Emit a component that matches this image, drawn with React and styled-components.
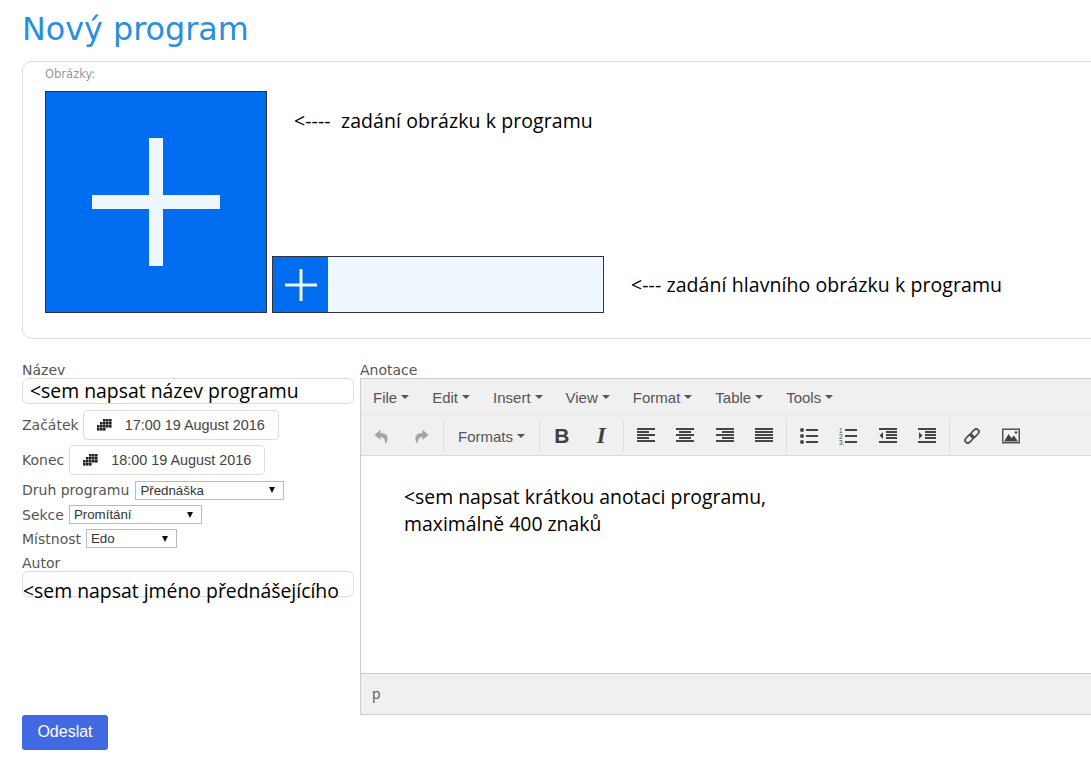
import React from 'react';
import styled, { createGlobalStyle } from 'styled-components';

const Global = createGlobalStyle`
  html, body {
    margin: 0;
    padding: 0;
    background: #fff;
    overflow: hidden;
  }
  body {
    font-family: "DejaVu Sans", sans-serif;
    width: 1091px;
    height: 769px;
  }
`;

const Page = styled.div`
  padding: 9px 0 0 22px;
  width: 1091px;
  height: 769px;
  box-sizing: border-box;
  overflow: hidden;
`;

const Title = styled.h1`
  margin: 0 0 12px;
  font-size: 31.8px;
  line-height: 40px;
  font-weight: 400;
  color: #2a8fdc;
`;

const Panel = styled.fieldset`
  margin: 0;
  padding: 6px 0 0 22px;
  width: 1200px;
  height: 278px;
  box-sizing: border-box;
  border: 1px solid #ddd;
  border-radius: 10px;
`;

const PanelLabel = styled.div`
  font-size: 11.5px;
  line-height: 13px;
  color: #999;
  margin-bottom: 10px;
`;

const Images = styled.div`
  display: flex;
  gap: 5px;
`;

const BigAdd = styled.div`
  width: 222px;
  height: 222px;
  box-sizing: border-box;
  border: 1px solid #333;
  background: #006cf0;
  display: flex;
  align-items: center;
  justify-content: center;
`;

const ImagesSide = styled.div`
  display: flex;
  flex-direction: column;
  justify-content: space-between;
`;

const Note = styled.div`
  font-family: "Open Sans", sans-serif;
  font-size: 19.5px;
  letter-spacing: 0.08px;
  line-height: 24px;
  color: #000;
  white-space: pre;
`;

const TopNote = styled(Note)`
  margin: 18px 0 0 22px;
`;

const MainRow = styled.div`
  display: flex;
  align-items: center;
  gap: 27px;
`;

const MainAdd = styled.div`
  width: 332px;
  height: 57px;
  box-sizing: border-box;
  border: 1px solid #333;
  background: #eef6fe;
  display: flex;
`;

const MainAddIcon = styled.div`
  width: 55px;
  background: #006cf0;
  display: flex;
  align-items: center;
  justify-content: center;
`;

const Form = styled.div`
  display: flex;
  gap: 6px;
  margin-top: 23px;
`;

const Left = styled.div`
  width: 332px;
  flex: none;
`;

const Label = styled.div`
  font-size: 14px;
  line-height: 16px;
  color: #555;
  margin-top: ${props => props.top || 0}px;
`;

const TextBox = styled.div`
  height: 26px;
  box-sizing: border-box;
  border: 1px solid #ddd;
  border-radius: 6px;
  padding-left: ${props => props.inset ?? 7}px;
  font-family: "Open Sans", sans-serif;
  font-size: 19.4px;
  line-height: ${props => props.textLine || 24}px;
  color: #000;
  white-space: nowrap;
`;

const Row = styled.div`
  display: flex;
  align-items: center;
  gap: ${props => props.gap || 5}px;
  height: ${props => props.h}px;
  margin-top: ${props => props.top || 0}px;
`;

const DateButton = styled.div`
  width: 196px;
  height: 30px;
  box-sizing: border-box;
  border: 1px solid #ddd;
  border-radius: 4px;
  display: flex;
  align-items: center;
  padding-left: 13px;
  gap: 12px;
  font-family: "Liberation Sans", sans-serif;
  font-size: 14.4px;
  color: #444;
`;

const Select = styled.div`
  width: ${props => props.w}px;
  height: 19px;
  box-sizing: border-box;
  border: 1px solid #bbb;
  display: flex;
  align-items: center;
  justify-content: space-between;
  padding: 0 8px 0 4px;
  font-family: "Liberation Sans", sans-serif;
  font-size: 13.3px;
  color: #333;
`;

const SelectArrow = styled.span`
  width: 0;
  height: 0;
  border-left: 3.5px solid transparent;
  border-right: 3.5px solid transparent;
  border-top: 6px solid #111;
`;

const Right = styled.div`
  width: 800px;
  flex: none;
`;

const Editor = styled.div`
  width: 800px;
  height: 337px;
  box-sizing: border-box;
  border: 1px solid #ccc;
  display: flex;
  flex-direction: column;
`;

const MenuBar = styled.div`
  height: 36px;
  flex: none;
  box-sizing: border-box;
  background: #f0f0f0;
  border-bottom: 1px solid #e4e4e4;
  display: flex;
  align-items: center;
  padding: 1px 0 0 12px;
  gap: 23px;
  font-family: "Liberation Sans", sans-serif;
  font-size: 15px;
  color: #555;
`;

const MenuItem = styled.div`
  display: flex;
  align-items: center;
  gap: 4px;
`;

const Caret = styled.span`
  width: 0;
  height: 0;
  border-left: 4px solid transparent;
  border-right: 4px solid transparent;
  border-top: 4px solid #555;
`;

const ToolBar = styled.div`
  height: 41px;
  flex: none;
  box-sizing: border-box;
  background: #f0f0f0;
  border-bottom: 1px solid #d9d9d9;
  display: flex;
  align-items: center;
  padding: 2px 0 0 1px;
`;

const Tool = styled.div`
  width: 39.5px;
  height: 30px;
  display: flex;
  align-items: center;
  justify-content: center;
  color: #444;
`;

const FormatsTool = styled.div`
  width: 91px;
  height: 30px;
  display: flex;
  align-items: center;
  justify-content: center;
  gap: 4px;
  font-family: "Liberation Sans", sans-serif;
  font-size: 15px;
  color: #555;
`;

const Divider = styled.div`
  width: 1px;
  height: 32px;
  margin: 0 2px;
  background: #ddd;
`;

const BoldGlyph = styled.span`
  font-family: "Liberation Sans", sans-serif;
  font-weight: 700;
  font-size: 21px;
  color: #404040;
`;

const ItalicGlyph = styled.span`
  font-family: "Liberation Serif", serif;
  font-style: italic;
  font-weight: 700;
  font-size: 23px;
  color: #404040;
`;

const Content = styled.div`
  flex: 1;
  padding: 27px 0 0 43px;
  font-family: "Open Sans", sans-serif;
  font-size: 19.4px;
  line-height: 27px;
  color: #000;
`;

const StatusBar = styled.div`
  height: 41px;
  flex: none;
  box-sizing: border-box;
  background: #f0f0f0;
  border-top: 1px solid #ccc;
  padding: 0 0 2px 11px;
  display: flex;
  align-items: center;
  font-family: "Open Sans", sans-serif;
  font-size: 14px;
  color: #555;
`;

const Submit = styled.button`
  display: block;
  width: 86px;
  height: 35px;
  padding: 0 0 2px;
  border: 0;
  border-radius: 3px;
  background: #4169e1;
  color: #fff;
  font-family: "Liberation Sans", sans-serif;
  font-size: 16px;
`;

const Plus = ({ size, bar }) => {
  const start = (size - bar) / 2;
  return (
    <svg width={size} height={size} viewBox={`0 0 ${size} ${size}`}>
      <rect x={start} y="0" width={bar} height={size} fill="#eef6fe" />
      <rect x="0" y={start} width={size} height={bar} fill="#eef6fe" />
    </svg>
  );
};

const CalendarIcon = () => (
  <svg width="16" height="12" viewBox="0 0 16 12" fill="#222">
    {[[6, 0], [9, 0], [12, 0], [3, 3], [6, 3], [9, 3], [12, 3], [0, 6], [3, 6], [6, 6], [9, 6], [12, 6], [0, 9], [3, 9], [6, 9]].map(([x, y]) => (
      <rect key={`${x}-${y}`} x={x} y={y} width="2.6" height="2.6" />
    ))}
  </svg>
);

const Lines = ({ rows }) => (
  <svg width="18" height="16" viewBox="0 0 18 16" fill="#444">
    {rows.map(([x, w], i) => (
      <rect key={i} x={x} y={i * 3} width={w} height="2" />
    ))}
  </svg>
);

const UndoIcon = ({ flip }) => (
  <svg width="16" height="15" viewBox="0 0 16 15" fill="#a5a5a5" style={flip ? { transform: 'scaleX(-1)' } : undefined}>
    <path d="M6.5 0.5 L0.5 6 L6.5 11 V8 C9.5 8 11.5 10 11 15 C15.5 10.5 14.5 4 6.5 4 Z" />
  </svg>
);

const BulletIcon = () => (
  <svg width="18" height="16" viewBox="0 0 18 16" fill="#444">
    <circle cx="2" cy="2" r="2" />
    <circle cx="2" cy="8" r="2" />
    <circle cx="2" cy="14" r="2" />
    <rect x="6" y="1" width="12" height="2" />
    <rect x="6" y="7" width="12" height="2" />
    <rect x="6" y="13" width="12" height="2" />
  </svg>
);

const NumberIcon = () => (
  <svg width="18" height="18" viewBox="0 0 18 18" fill="#444">
    <text x="0" y="5.5" fontFamily="Liberation Sans" fontSize="6.5">1</text>
    <text x="0" y="11.5" fontFamily="Liberation Sans" fontSize="6.5">2</text>
    <text x="0" y="17.5" fontFamily="Liberation Sans" fontSize="6.5">3</text>
    <rect x="6" y="2" width="12" height="2" />
    <rect x="6" y="8" width="12" height="2" />
    <rect x="6" y="14" width="12" height="2" />
  </svg>
);

const IndentIcon = ({ outdent }) => (
  <svg width="18" height="16" viewBox="0 0 18 16" fill="#444">
    <rect x="0" y="0" width="18" height="2" />
    <rect x="7" y="3" width="11" height="2" />
    <rect x="7" y="6" width="11" height="2" />
    <rect x="7" y="9" width="11" height="2" />
    <rect x="0" y="13" width="18" height="2" />
    <path d={outdent ? 'M4 4 V11 L0.5 7.5 Z' : 'M1 4 V11 L4.5 7.5 Z'} />
  </svg>
);

const LinkIcon = () => (
  <svg width="18" height="18" viewBox="0 0 18 18" fill="none" stroke="#444" strokeWidth="1.6">
    <rect x="7" y="3.5" width="9.5" height="5.5" rx="2.75" transform="rotate(-45 11.75 6.25)" />
    <rect x="1.5" y="9" width="9.5" height="5.5" rx="2.75" transform="rotate(-45 6.25 11.75)" />
  </svg>
);

const ImageIcon = () => (
  <svg width="18" height="16" viewBox="0 0 18 16">
    <rect x="0.75" y="1.25" width="16.5" height="13.5" fill="#f4f4f4" stroke="#555" strokeWidth="1.5" />
    <path d="M2 13.5 L6.5 6 L9.5 10 L12 7.5 L16 13.5 Z" fill="#444" />
    <circle cx="14" cy="4.5" r="1.3" fill="#444" />
  </svg>
);

const MENU = ['File', 'Edit', 'Insert', 'View', 'Format', 'Table', 'Tools'];

const ALIGN_LEFT = [[0, 18], [0, 12], [0, 18], [0, 12], [0, 18]];
const ALIGN_CENTER = [[0, 18], [3, 12], [0, 18], [3, 12], [0, 18]];
const ALIGN_RIGHT = [[0, 18], [6, 12], [0, 18], [6, 12], [0, 18]];
const ALIGN_JUSTIFY = [[0, 18], [0, 18], [0, 18], [0, 18], [0, 18]];

export default function App() {
  return (
    <Page>
      <Global />
      <Title>Nový program</Title>
      <Panel>
        <PanelLabel>Obrázky:</PanelLabel>
        <Images>
          <BigAdd>
            <Plus size={128} bar={14} />
          </BigAdd>
          <ImagesSide>
            <TopNote>{'<----  zadání obrázku k programu'}</TopNote>
            <MainRow>
              <MainAdd>
                <MainAddIcon>
                  <Plus size={32} bar={3} />
                </MainAddIcon>
              </MainAdd>
              <Note>{'<--- zadání hlavního obrázku k programu'}</Note>
            </MainRow>
          </ImagesSide>
        </Images>
      </Panel>
      <Form>
        <Left>
          <Label>Název</Label>
          <TextBox>{'<sem napsat název programu'}</TextBox>
          <Row h={36} top={3} gap={4}>
            <Label>Začátek</Label>
            <DateButton><CalendarIcon />17:00 19 August 2016</DateButton>
          </Row>
          <Row h={34}>
            <Label>Konec</Label>
            <DateButton><CalendarIcon />18:00 19 August 2016</DateButton>
          </Row>
          <Row h={26} gap={6}>
            <Label>Druh programu</Label>
            <Select w={149}>Přednáška<SelectArrow /></Select>
          </Row>
          <Row h={23}>
            <Label>Sekce</Label>
            <Select w={133}>Promítání<SelectArrow /></Select>
          </Row>
          <Row h={25}>
            <Label>Místnost</Label>
            <Select w={91}>Edo<SelectArrow /></Select>
          </Row>
          <Label top={4}>Autor</Label>
          <TextBox inset={0} textLine={38}>{'<sem napsat jméno přednášejícího'}</TextBox>
        </Left>
        <Right>
          <Label>Anotace</Label>
          <Editor>
            <MenuBar>
              {MENU.map(item => (
                <MenuItem key={item}>{item}<Caret /></MenuItem>
              ))}
            </MenuBar>
            <ToolBar>
              <Tool><UndoIcon /></Tool>
              <Tool><UndoIcon flip /></Tool>
              <Divider />
              <FormatsTool>Formats<Caret /></FormatsTool>
              <Divider />
              <Tool><BoldGlyph>B</BoldGlyph></Tool>
              <Tool><ItalicGlyph>I</ItalicGlyph></Tool>
              <Divider />
              <Tool><Lines rows={ALIGN_LEFT} /></Tool>
              <Tool><Lines rows={ALIGN_CENTER} /></Tool>
              <Tool><Lines rows={ALIGN_RIGHT} /></Tool>
              <Tool><Lines rows={ALIGN_JUSTIFY} /></Tool>
              <Divider />
              <Tool><BulletIcon /></Tool>
              <Tool><NumberIcon /></Tool>
              <Tool><IndentIcon outdent /></Tool>
              <Tool><IndentIcon /></Tool>
              <Divider />
              <Tool><LinkIcon /></Tool>
              <Tool><ImageIcon /></Tool>
            </ToolBar>
            <Content>
              {'<sem napsat krátkou anotaci programu,'}
              <br />
              maximálně 400 znaků
            </Content>
            <StatusBar>p</StatusBar>
          </Editor>
        </Right>
      </Form>
      <Submit>Odeslat</Submit>
    </Page>
  );
}
